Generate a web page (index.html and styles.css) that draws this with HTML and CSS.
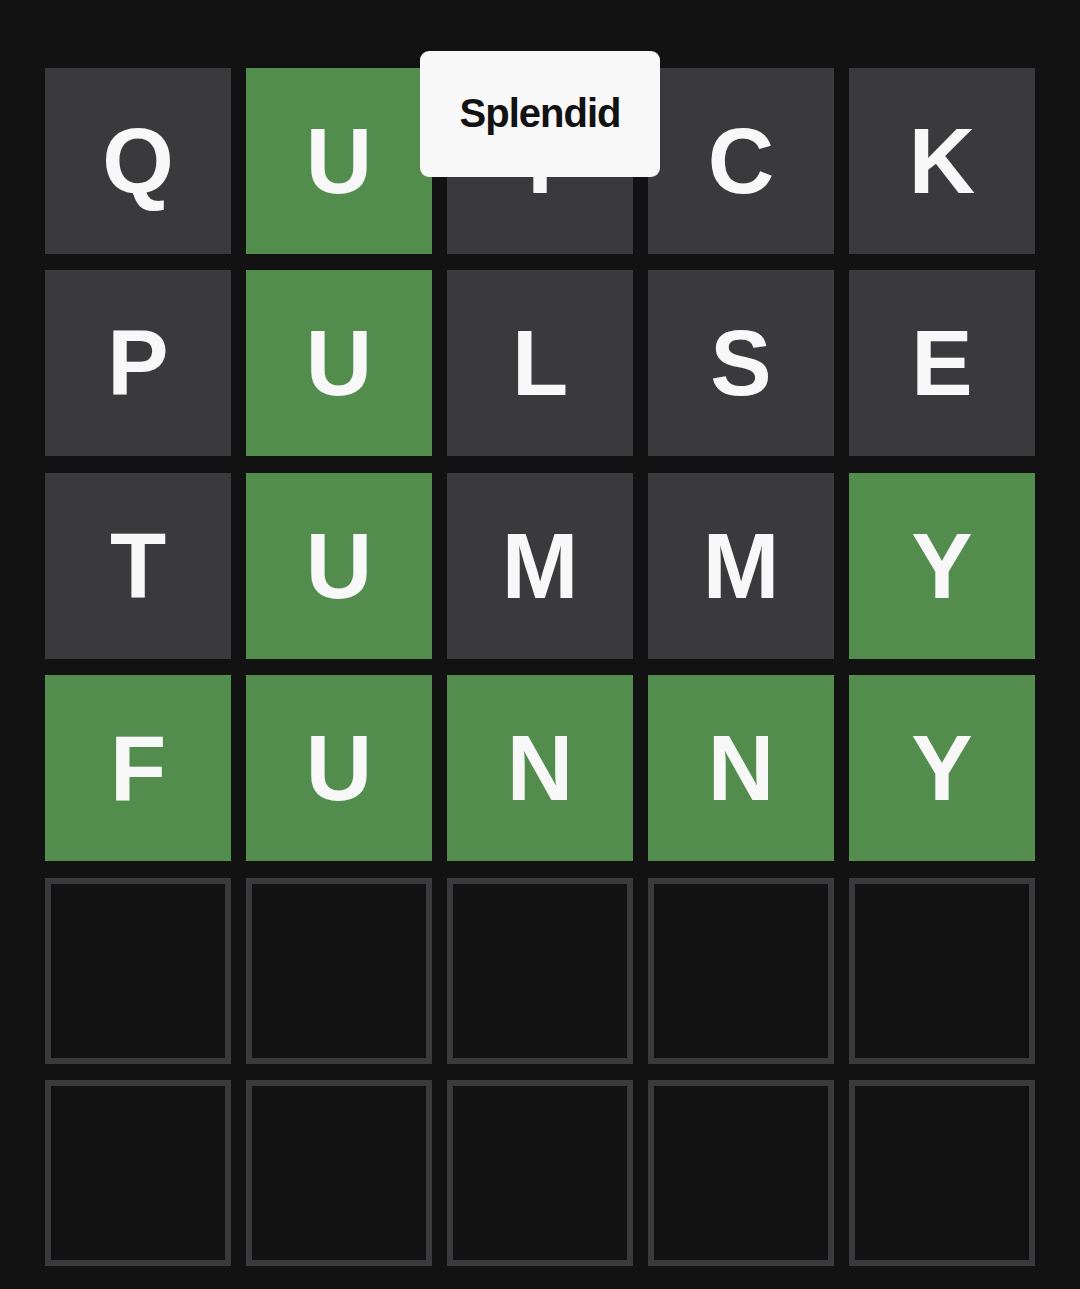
FILE: index.html
```html
<!DOCTYPE html>
<html>
<head>
<meta charset="utf-8">
<link rel="stylesheet" href="styles.css">
</head>
<body>
<div class="board">
  <div class="toast">Splendid</div>
  <div class="grid">
    <div class="tile absent">Q</div>
    <div class="tile correct">U</div>
    <div class="tile absent">I</div>
    <div class="tile absent">C</div>
    <div class="tile absent">K</div>

    <div class="tile absent">P</div>
    <div class="tile correct">U</div>
    <div class="tile absent">L</div>
    <div class="tile absent">S</div>
    <div class="tile absent">E</div>

    <div class="tile absent">T</div>
    <div class="tile correct">U</div>
    <div class="tile absent">M</div>
    <div class="tile absent">M</div>
    <div class="tile correct">Y</div>

    <div class="tile correct">F</div>
    <div class="tile correct">U</div>
    <div class="tile correct">N</div>
    <div class="tile correct">N</div>
    <div class="tile correct">Y</div>

    <div class="tile empty"></div>
    <div class="tile empty"></div>
    <div class="tile empty"></div>
    <div class="tile empty"></div>
    <div class="tile empty"></div>

    <div class="tile empty"></div>
    <div class="tile empty"></div>
    <div class="tile empty"></div>
    <div class="tile empty"></div>
    <div class="tile empty"></div>
  </div>
</div>
</body>
</html>
```

FILE: styles.css
```css
html, body {
  margin: 0;
  padding: 0;
  background: #121213;
}

body {
  width: 1080px;
  height: 1289px;
  overflow: hidden;
  font-family: "Liberation Sans", Arial, sans-serif;
}

.board {
  position: relative;
  padding: 68px 45px 0 45px;
}

.grid {
  display: grid;
  grid-template-columns: repeat(5, 186px);
  grid-template-rows: repeat(6, 186px);
  column-gap: 15px;
  row-gap: 16.4px;
}

.tile {
  box-sizing: border-box;
  display: flex;
  align-items: center;
  justify-content: center;
  font-size: 92px;
  font-weight: 700;
  line-height: 1;
  color: #f8f8f8;
  letter-spacing: 0;
}

.absent {
  background: #3a3a3c;
}

.correct {
  background: #538d4e;
}

.empty {
  background: #121213;
  border: 6px solid #3a3a3c;
}

.toast {
  position: absolute;
  top: 51px;
  left: 420px;
  width: 240px;
  height: 126px;
  box-sizing: border-box;
  display: flex;
  align-items: center;
  justify-content: center;
  background: #f8f8f8;
  border-radius: 9px;
  color: #121212;
  font-size: 40px;
  font-weight: 700;
  letter-spacing: -1px;
  padding-bottom: 2px;
  z-index: 2;
}
```
